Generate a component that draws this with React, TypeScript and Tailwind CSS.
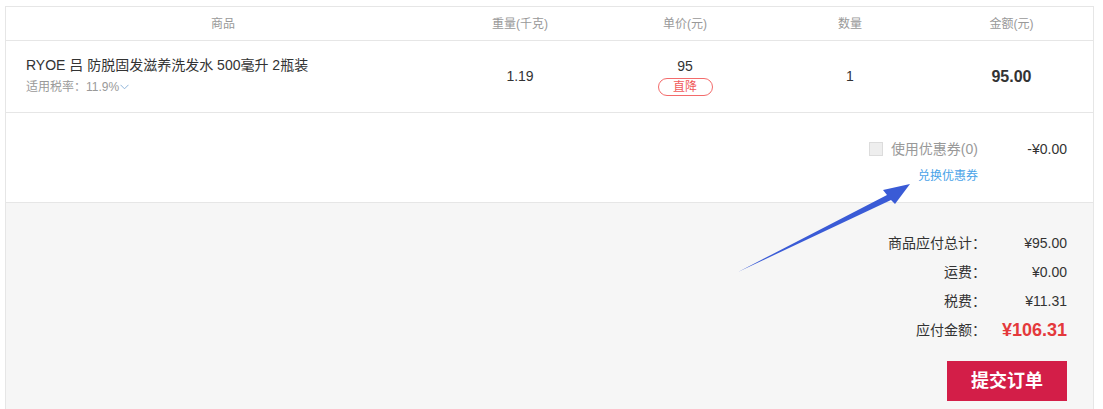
import React from "react";

const font = { fontFamily: '"Liberation Sans", Arial, "Noto Sans CJK SC", sans-serif' };

function Chevron() {
  return (
    <svg width="9" height="6" viewBox="0 0 9 6" className="ml-[1px] inline-block">
      <path d="M0.5 0.8 L4.5 4.8 L8.5 0.8" fill="none" stroke="#8fb4d9" strokeWidth="1" />
    </svg>
  );
}

function SummaryRow({ label, value, strong }: { label: string; value: string; strong?: boolean }) {
  return (
    <div className="flex items-center justify-end h-[29px]">
      <span className="text-[14px] text-[#333]">{label}</span>
      <span
        className={
          strong
            ? "w-[81px] text-right text-[18px] font-bold text-[#e4393c]"
            : "w-[81px] text-right text-[14px] text-[#333]"
        }
      >
        {value}
      </span>
    </div>
  );
}

export default function App() {
  return (
    <div className="relative w-[1103px] h-[409px] overflow-hidden bg-white" style={font}>
      <div className="ml-[5px] mt-[6px] w-[1089px] border border-[#e6e6e6] border-b-0">
        {/* header */}
        <div className="grid grid-cols-[434px_160px_170px_160px_1fr] h-[34px] items-center border-b border-[#e6e6e6] text-[12px] text-[#999]">
          <div className="text-center">商品</div>
          <div className="text-center">重量(千克)</div>
          <div className="text-center">单价(元)</div>
          <div className="text-center">数量</div>
          <div className="text-center">金额(元)</div>
        </div>

        {/* product row */}
        <div className="grid grid-cols-[434px_160px_170px_160px_1fr] h-[72px] items-center border-b border-[#e6e6e6] text-[14px] text-[#333]">
          <div className="pl-[20px] pb-[3px]">
            <div className="leading-[20px]">RYOE 吕 防脱固发滋养洗发水 500毫升 2瓶装</div>
            <div className="mt-[3px] flex items-center text-[12px] text-[#999] leading-[18px]">
              适用税率：11.9%
              <Chevron />
            </div>
          </div>
          <div className="text-center">1.19</div>
          <div className="flex flex-col items-center pb-[2px]">
            <div className="leading-[20px]">95</div>
            <div className="mt-[2px] w-[55px] h-[18px] rounded-full border border-[#f36b6b] text-[12px] leading-[16px] text-center text-[#f05a5a]">
              直降
            </div>
          </div>
          <div className="text-center">1</div>
          <div className="text-center text-[16px] font-bold">95.00</div>
        </div>

        {/* coupon */}
        <div className="h-[90px] border-b border-[#e6e6e6] pr-[26px] pt-[26px]">
          <div className="flex items-center justify-end h-[20px]">
            <span className="w-[14px] h-[14px] border border-[#dcdcdc] bg-[#eee]" />
            <span className="ml-[8px] text-[14px] text-[#999]">使用优惠券(0)</span>
            <span className="w-[89px] text-right text-[14px] text-[#333]">-¥0.00</span>
          </div>
          <div className="mt-[8px] flex justify-end pr-[89px]">
            <span className="text-[12px] text-[#4aa3e8]">兑换优惠券</span>
          </div>
        </div>

        {/* summary */}
        <div className="bg-[#f6f6f6] h-[220px] pt-[26px] pr-[26px]">
          <SummaryRow label="商品应付总计：" value="¥95.00" />
          <SummaryRow label="运费：" value="¥0.00" />
          <SummaryRow label="税费：" value="¥11.31" />
          <SummaryRow label="应付金额：" value="¥106.31" strong />
          <div className="mt-[16px] flex justify-end">
            <button className="w-[120px] h-[40px] bg-[#d31e48] text-white text-[18px] font-bold">
              提交订单
            </button>
          </div>
        </div>
      </div>

      {/* annotation arrow */}
      <svg className="absolute left-0 top-0 pointer-events-none" width="1103" height="409">
        <polygon
          points="738,272 887,195 883,190 910,184 895,204 891,200"
          fill="#3a5bd6"
        />
      </svg>
    </div>
  );
}
